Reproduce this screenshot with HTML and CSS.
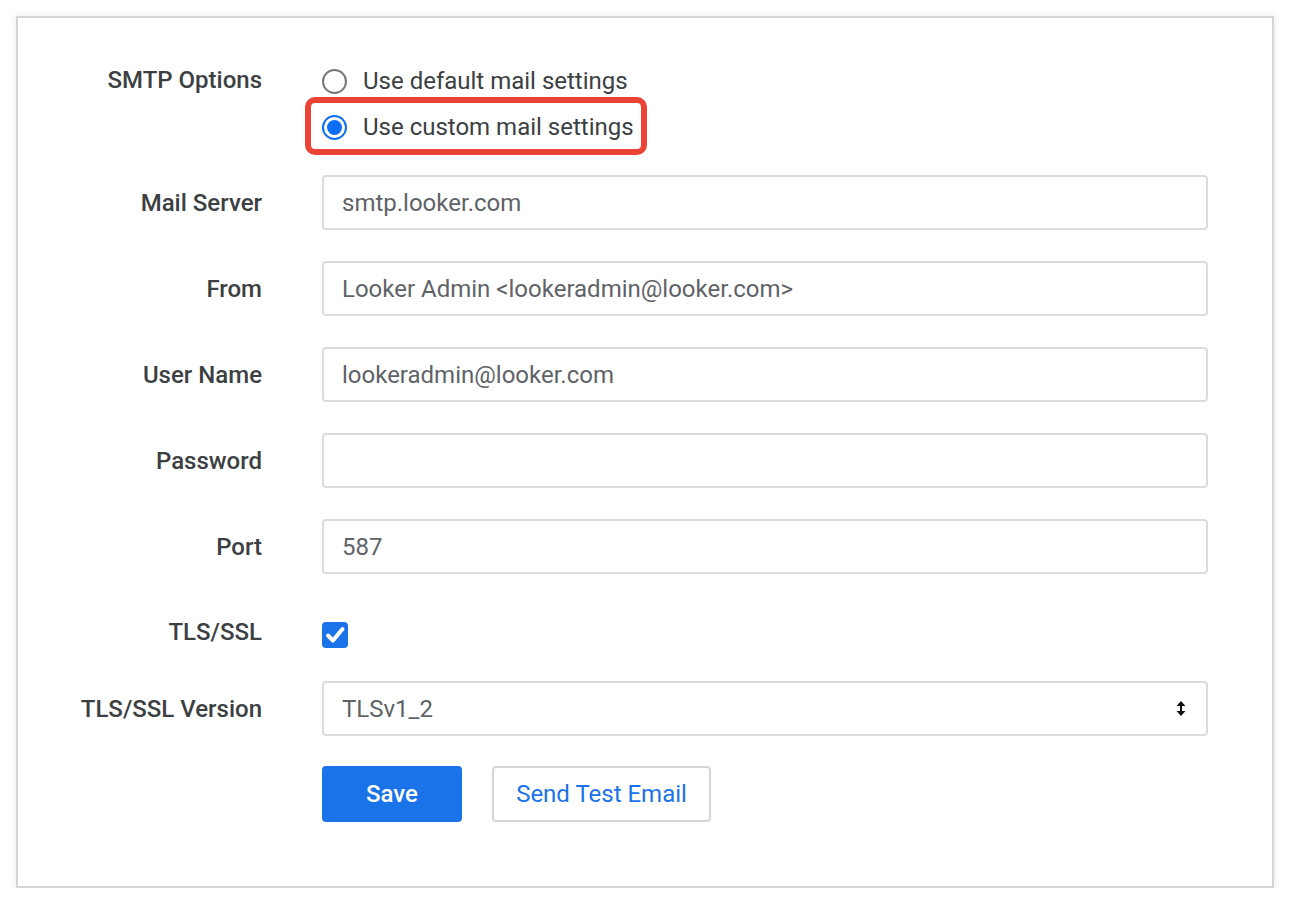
FILE: index.html
```html
<!DOCTYPE html>
<html>
<head>
<meta charset="utf-8">
<link rel="stylesheet" href="styles.css">
</head>
<body>
<div class="panel">
  <div class="row row-options">
    <div class="label label-top">SMTP Options</div>
    <div class="options">
      <label class="option">
        <span class="radio"></span>
        <span class="option-text">Use default mail settings</span>
      </label>
      <label class="option option-highlight">
        <span class="radio radio-on"><span class="radio-dot"></span></span>
        <span class="option-text">Use custom mail settings</span>
      </label>
    </div>
  </div>

  <div class="row row-field row-first">
    <div class="label">Mail Server</div>
    <div class="input">smtp.looker.com</div>
  </div>
  <div class="row row-field">
    <div class="label">From</div>
    <div class="input">Looker Admin &lt;lookeradmin@looker.com&gt;</div>
  </div>
  <div class="row row-field">
    <div class="label">User Name</div>
    <div class="input">lookeradmin@looker.com</div>
  </div>
  <div class="row row-field">
    <div class="label">Password</div>
    <div class="input"></div>
  </div>
  <div class="row row-field">
    <div class="label">Port</div>
    <div class="input">587</div>
  </div>

  <div class="row row-check">
    <div class="label">TLS/SSL</div>
    <div class="checkbox">
      <svg width="22" height="22" viewBox="0 0 22 22"><path d="M4 11.5 L9 16.5 L18.5 5" fill="none" stroke="#fff" stroke-width="4" stroke-linecap="round" stroke-linejoin="round"/></svg>
    </div>
  </div>

  <div class="row row-select">
    <div class="label">TLS/SSL Version</div>
    <div class="input select">
      <span>TLSv1_2</span>
      <svg class="select-arrow" width="10" height="15" viewBox="0 0 10 15"><path d="M5 0 L9.5 5 L6 5 L6 10 L9.5 10 L5 15 L0.5 10 L4 10 L4 5 L0.5 5 Z" fill="#111"/></svg>
    </div>
  </div>

  <div class="row row-buttons">
    <div class="label"></div>
    <div class="buttons">
      <button class="btn btn-primary">Save</button>
      <button class="btn btn-secondary">Send Test Email</button>
    </div>
  </div>
</div>
</body>
</html>
```

FILE: styles.css
```css
* { box-sizing: border-box; }

html, body {
  margin: 0;
  padding: 0;
  background: #ffffff;
}

body {
  padding: 16px 0 0 16px;
  font-family: Roboto, "Noto Sans", Arial, sans-serif;
  color: #3c4043;
}

.panel {
  width: 1258px;
  height: 872px;
  border: 2px solid #d5d5d5;
  background: #ffffff;
  box-shadow: 0 0 8px rgba(0, 0, 0, 0.10);
  padding-top: 40px;
}

.row {
  display: grid;
  grid-template-columns: 244px 886px;
  column-gap: 60px;
  align-items: center;
}

.label {
  text-align: right;
  font-size: 24px;
  font-weight: 500;
  color: #3c4043;
}

.label-top {
  align-self: start;
  line-height: 44px;
}

.options {
  display: flex;
  flex-direction: column;
  align-items: flex-start;
}

.option {
  position: relative;
  display: flex;
  align-items: center;
  height: 46px;
  font-size: 24px;
  color: #3c4043;
}

.option-highlight::before {
  content: "";
  position: absolute;
  left: -17px;
  right: -13px;
  top: -7px;
  bottom: -5px;
  border: 6px solid #ea4335;
  border-radius: 10px;
}

.radio {
  width: 25px;
  height: 25px;
  border-radius: 50%;
  border: 2px solid #767676;
  margin-right: 16px;
  display: flex;
  align-items: center;
  justify-content: center;
  flex: none;
}

.radio-on {
  border-color: #0b6ef5;
}

.radio-dot {
  width: 15px;
  height: 15px;
  border-radius: 50%;
  background: #0b6ef5;
}

.row-field {
  margin-top: 31px;
}

.row-first {
  margin-top: 25px;
}

.input {
  height: 55px;
  border: 2px solid #dcdcdc;
  border-radius: 4px;
  padding: 0 18px;
  display: flex;
  align-items: center;
  font-size: 24px;
  color: #5f6368;
}

.row-check {
  margin-top: 48px;
}

.checkbox {
  width: 26px;
  height: 26px;
  border-radius: 4px;
  background: #1a73e8;
  display: flex;
  align-items: center;
  justify-content: center;
}

.row-check .label {
  margin-top: -6px;
}

.row-select {
  margin-top: 33px;
}

.select {
  justify-content: space-between;
  padding-right: 20px;
}

.row-buttons {
  margin-top: 30px;
}

.buttons {
  display: flex;
  gap: 30px;
}

.btn {
  height: 56px;
  border-radius: 4px;
  font-family: Roboto, "Noto Sans", Arial, sans-serif;
  font-size: 24px;
  font-weight: 500;
  cursor: pointer;
}

.btn-primary {
  width: 140px;
  background: #1a73e8;
  border: none;
  color: #ffffff;
}

.btn-secondary {
  width: 219px;
  background: #ffffff;
  border: 2px solid #d5d5d5;
  color: #1a73e8;
  font-weight: 400;
}
```
